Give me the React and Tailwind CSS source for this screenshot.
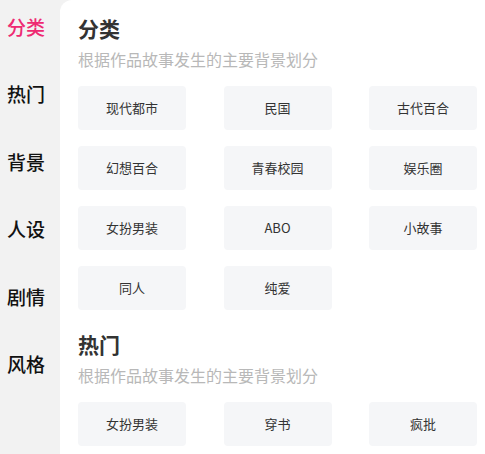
import React from 'react';

const tabs = ['分类', '热门', '背景', '人设', '剧情', '风格'];

const sections = [
    {
        title: '分类',
        desc: '根据作品故事发生的主要背景划分',
        tags: ['现代都市', '民国', '古代百合', '幻想百合', '青春校园', '娱乐圈', '女扮男装', 'ABO', '小故事', '同人', '纯爱'],
    },
    {
        title: '热门',
        desc: '根据作品故事发生的主要背景划分',
        tags: ['女扮男装', '穿书', '疯批'],
    },
];

// 分类标签
const Tag = ({ label }) => (
    <div className="h-[44px] rounded-[4px] bg-[#f5f6f8] flex items-center justify-center text-[13px] text-[#333333]">
        {label}
    </div>
);

const Section = ({ title, desc, tags }) => (
    <div className="mb-[22px]">
        <h2 className="h-[24px] leading-[24px] text-[21px] font-bold text-[#333333]">{title}</h2>
        <p className="mt-[8px] h-[22px] leading-[22px] text-[16px] text-[#b8b8b8]">{desc}</p>
        <div className="mt-[16px] grid grid-cols-3 gap-x-[37.5px] gap-y-[16px]">
            {tags.map((t, i) => (
                <Tag key={i} label={t} />
            ))}
        </div>
    </div>
);

const App = () => {
    return (
        <div
            className="w-[485px] h-[454px] overflow-hidden flex bg-[#f2f2f2]"
            style={{ fontFamily: '"Noto Sans CJK SC", "Noto Sans", sans-serif' }}
        >
            {/* 左侧导航 */}
            <div className="w-[60px] shrink-0 pt-[15px] pl-[7px] flex flex-col gap-[43.4px]">
                {tabs.map((t, i) => (
                    <div
                        key={t}
                        className={`h-[24px] leading-[24px] text-[19px] font-medium ${i === 0 ? 'text-[#ee2a72]' : 'text-[#111111]'}`}
                    >
                        {t}
                    </div>
                ))}
            </div>

            {/* 右侧内容 */}
            <div className="flex-1 bg-white rounded-tl-[12px] pl-[18px] pr-[8px] pt-[16px]">
                {sections.map((s) => (
                    <Section key={s.title} {...s} />
                ))}
            </div>
        </div>
    );
};

export default App;
